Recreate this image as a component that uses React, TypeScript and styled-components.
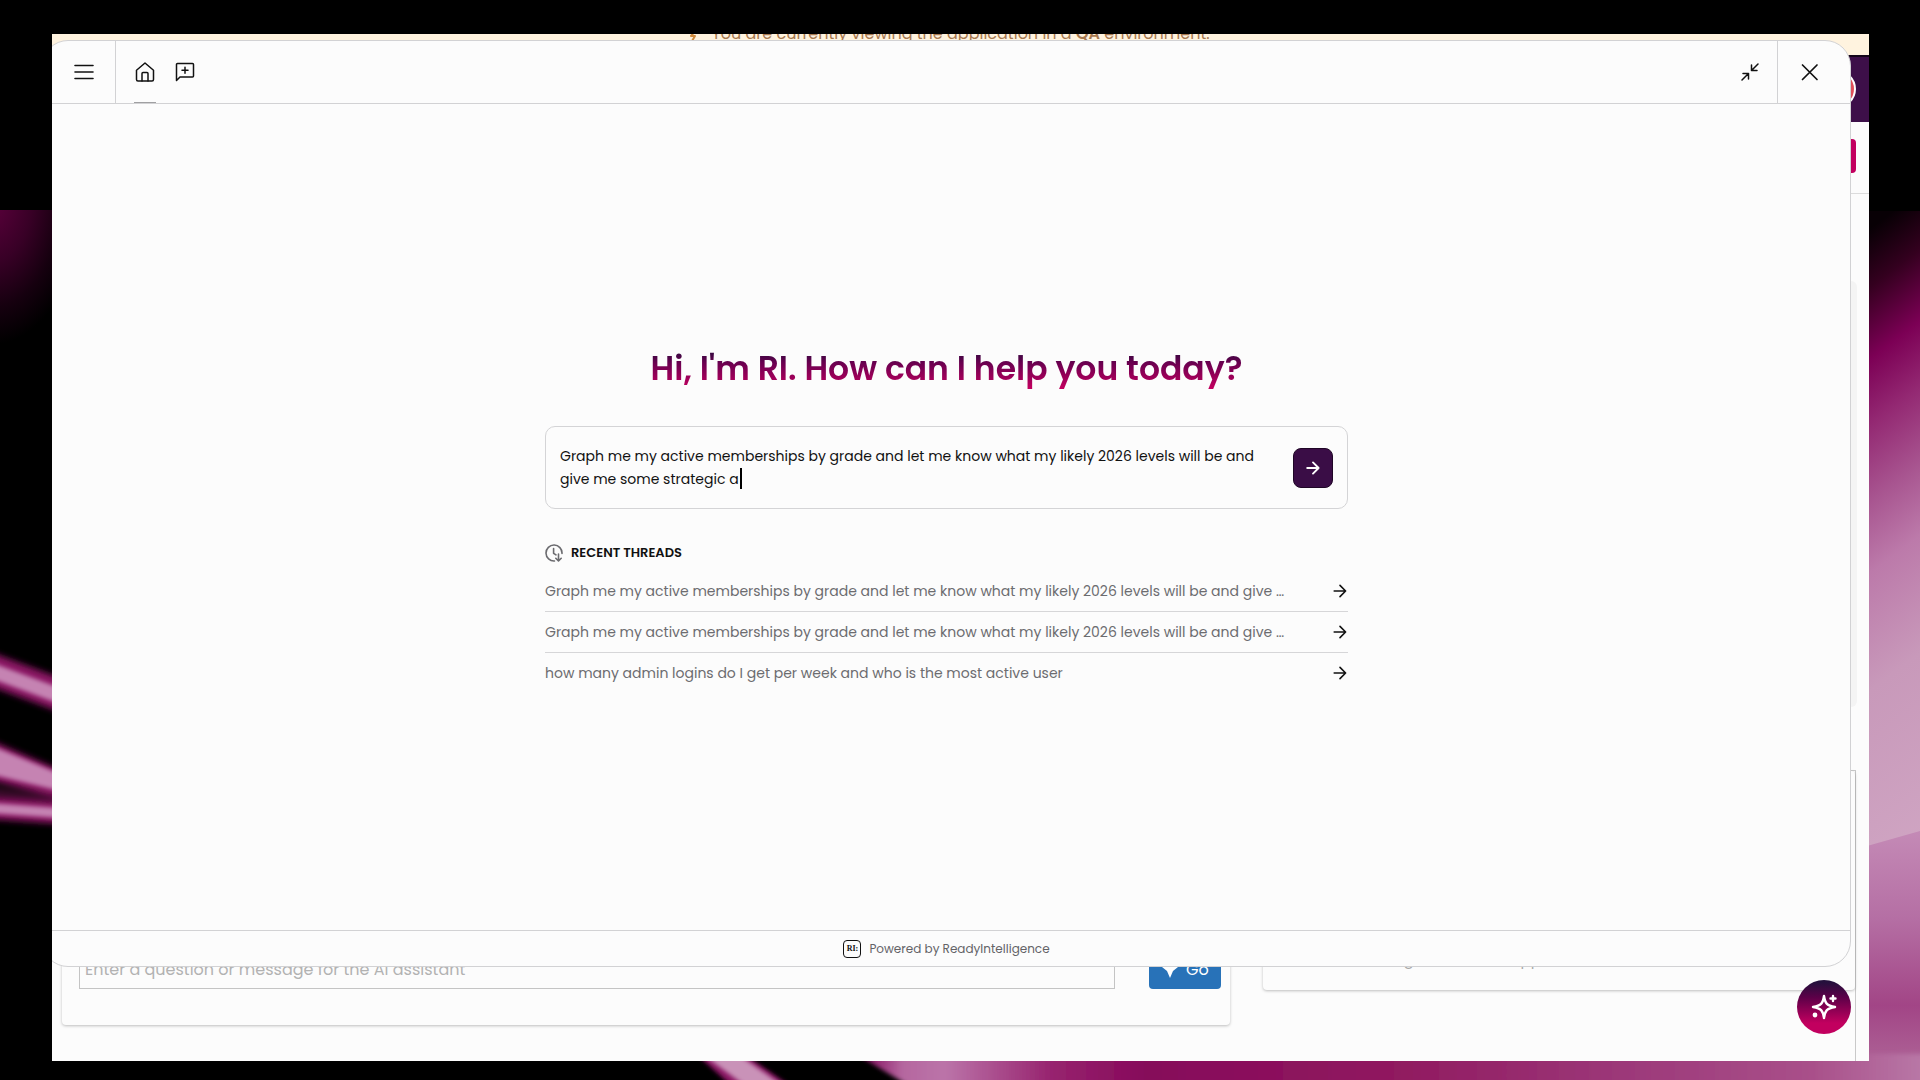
import React, { useState } from "react";
import styled, { createGlobalStyle } from "styled-components";

const Global = createGlobalStyle`
  *, *::before, *::after { box-sizing: border-box; }
  body {
    margin: 0;
    background: #000;
    color: #111;
    font-family: Poppins, Inter, "Open Sans", sans-serif;
  }
  button, input, textarea { font: inherit; }
`;

const LINE = "#d2d2d4";
const PAPER = "#fcfcfc";

const Desktop = styled.div`
  position: relative;
  display: flex;
  min-height: 100vh;
  padding: 34px 51px 19px 52px;
  overflow: hidden;
`;

const Wallpaper = styled.svg`
  position: absolute;
  inset: 0;
  width: 100%;
  height: 100%;
`;

const Window = styled.div`
  position: relative;
  flex: 1;
  display: flex;
  flex-direction: column;
  overflow: hidden;
  background: ${PAPER};
`;

const Banner = styled.div`
  display: flex;
  align-items: center;
  justify-content: center;
  gap: 10px;
  height: 42px;
  margin-top: -21px;
  padding-right: 24px;
  flex: none;
  background: #fff3df;
  color: #a8794f;
  font-size: 16px;
  line-height: 24px;

  strong { font-weight: 600; }
  svg { color: #d08a3c; }
`;

const BrandBar = styled.div`
  display: flex;
  align-items: center;
  justify-content: flex-end;
  flex: none;
  height: 67px;
  padding: 0 13px 2px 0;
  border-top: 2px solid #14051a;
  background: #3d0f49;
`;

const Avatar = styled.span`
  width: 38px;
  height: 38px;
  border: 2px solid #fff;
  border-radius: 50%;
  background: linear-gradient(90deg, #8b7a3c 92%, #e0505a 92%);
`;

const ActionBar = styled.div`
  display: flex;
  align-items: center;
  justify-content: flex-end;
  flex: none;
  height: 72px;
  padding: 0 13px 4px 0;
  border-bottom: 1px solid #dcdcdc;
`;

const PinkButton = styled.button`
  width: 96px;
  height: 34px;
  border: 0;
  border-radius: 4px;
  background: #c2005f;
`;

const Placeholder = styled.div`
  align-self: flex-end;
  flex: 1;
  width: 592px;
  margin: 87px 12px 63px 0;
  border-radius: 6px;
  background: #f4f4f4;
`;

const Workspace = styled.section`
  display: grid;
  grid-template-columns: 1169fr 592fr;
  gap: 33px;
  align-items: start;
  flex: none;
  height: 291px;
  margin-right: 13px;
  padding-left: 10px;
  border: 1px solid #c9c9c9;
  border-width: 1px 1px 0 0;
`;

const Card = styled.div<{ $height: number }>`
  display: flex;
  align-items: flex-end;
  height: ${(p) => p.$height}px;
  border-radius: 4px;
  box-shadow: 0 1px 3px rgba(0, 0, 0, 0.25);
`;

const AskForm = styled.form`
  display: flex;
  flex: 1;
  gap: 34px;
  padding: 0 9px 36px 17px;
`;

const AskInput = styled.input`
  flex: 1;
  min-width: 0;
  height: 40px;
  padding: 0 5px;
  border: 1px solid #c4c4c4;
  background: transparent;
  font-size: 16px;

  &::placeholder { color: #b2b2b2; opacity: 1; }
`;

const GoButton = styled.button`
  display: flex;
  align-items: center;
  justify-content: center;
  gap: 8px;
  width: 72px;
  height: 40px;
  padding: 0;
  border: 0;
  border-radius: 4px;
  background: #2872b8;
  color: #fff;
  font-size: 16px;
`;

const CardNote = styled.p`
  margin: 0;
  padding: 0 0 18px 20px;
  color: #a8a8a8;
  font-size: 15px;
  line-height: 24px;
`;

const Panel = styled.main`
  position: absolute;
  inset: 6px 18px 94px -10px;
  display: flex;
  flex-direction: column;
  border: 1px solid ${LINE};
  border-radius: 26px;
  overflow: hidden;
  background: ${PAPER};
`;

const PanelHeader = styled.header`
  display: flex;
  justify-content: space-between;
  flex: none;
  height: 63px;
  border-bottom: 1px solid ${LINE};
`;

const HeaderGroup = styled.div`
  display: flex;
`;

const HeaderButton = styled.button<{ $width: number; $edge?: "left" | "right" }>`
  display: flex;
  align-items: center;
  justify-content: center;
  width: ${(p) => p.$width}px;
  padding: 0;
  border: 0 solid ${LINE};
  border-left-width: ${(p) => (p.$edge === "left" ? 1 : 0)}px;
  border-right-width: ${(p) => (p.$edge === "right" ? 1 : 0)}px;
  background: none;
  color: #111;
  cursor: pointer;
`;

const MenuButton = styled(HeaderButton)`
  padding-left: 9px;
`;

const Tabs = styled.nav`
  display: flex;
  gap: 18px;
  padding-left: 18px;
`;

const Tab = styled.button<{ $active?: boolean }>`
  display: flex;
  align-items: center;
  justify-content: center;
  width: 22px;
  padding: 0;
  border: 0;
  border-bottom: 1px solid ${(p) => (p.$active ? "#a0a0a2" : "transparent")};
  background: none;
  color: #111;
  cursor: pointer;
`;

const Content = styled.div`
  flex: 1;
  display: flex;
  flex-direction: column;
  align-items: center;
  justify-content: center;
`;

const Column = styled.div`
  width: 100%;
  max-width: 803px;
  padding-top: 3px;
`;

const Title = styled.h1`
  margin: 0 0 32px;
  background: linear-gradient(180deg, #2a0a3c 12%, #6a0050 38%, #c2005f 88%);
  background-clip: text;
  -webkit-background-clip: text;
  color: transparent;
  font-size: 33px;
  font-weight: 600;
  line-height: 50px;
  text-align: center;
`;

const Composer = styled.form`
  position: relative;
  display: flex;
  align-items: center;
  gap: 16px;
  height: 83px;
  padding: 0 14px;
  border: 1px solid #d4d4d6;
  border-radius: 10px;
`;

const Prompt = styled.textarea`
  flex: 1;
  height: 46px;
  padding: 0;
  border: 0;
  outline: 0;
  resize: none;
  overflow: hidden;
  background: transparent;
  color: #111;
  font-size: 14px;
  line-height: 23px;
`;

const Caret = styled.span`
  position: absolute;
  left: 194px;
  top: 41px;
  width: 2px;
  height: 21px;
  background: #000;
`;

const SendButton = styled.button`
  display: flex;
  align-items: center;
  justify-content: center;
  flex: none;
  width: 40px;
  height: 40px;
  padding: 0;
  border: 1px solid #1f0626;
  border-radius: 8px;
  background: #3a0d46;
  color: #fff;
`;

const ThreadsHeading = styled.h2`
  display: flex;
  align-items: center;
  gap: 8px;
  margin: 34px 0 8px;
  font-size: 13px;
  font-weight: 600;
  line-height: 20px;
  color: #111;

  svg { color: #6b6b6f; }
`;

const ThreadList = styled.ul`
  margin: 0;
  padding: 0;
  list-style: none;
`;

const ThreadItem = styled.li`
  & + & { border-top: 1px solid #d6d6d8; }
`;

const ThreadLink = styled.a`
  display: flex;
  align-items: center;
  justify-content: space-between;
  height: 40px;
  color: #6c6c70;
  font-size: 14px;
  text-decoration: none;

  span { white-space: nowrap; }
  svg { color: #111; margin-right: 1px; }
`;

const PanelFooter = styled.footer`
  display: flex;
  align-items: center;
  justify-content: center;
  gap: 8px;
  flex: none;
  height: 36px;
  border-top: 1px solid ${LINE};
  color: #636367;
  font-size: 12px;
`;

const Badge = styled.span`
  display: flex;
  align-items: center;
  justify-content: center;
  width: 18px;
  height: 18px;
  border: 1px solid #111;
  border-radius: 4px;
  color: #111;
  font: bold 8px "Liberation Serif", serif;
`;

const AssistantButton = styled.button`
  position: absolute;
  right: 18px;
  bottom: 27px;
  display: flex;
  align-items: center;
  justify-content: center;
  width: 54px;
  height: 54px;
  padding: 0;
  border: 0;
  border-radius: 50%;
  background: linear-gradient(180deg, #24103c 4%, #5c0048 32%, #c2005f 80%);
  color: #fff;
`;

const Icon = ({ size, stroke = 1.5, children }: { size: number; stroke?: number; children: React.ReactNode }) => (
  <svg width={size} height={size} viewBox={`0 0 ${size} ${size}`} fill="none" stroke="currentColor"
    strokeWidth={stroke} strokeLinecap="round" strokeLinejoin="round" aria-hidden="true">
    {children}
  </svg>
);

const ArrowIcon = ({ stroke = 1.6 }: { stroke?: number }) => (
  <Icon size={14} stroke={stroke}><path d="M1.2 7h11.4M7 1.4 12.6 7 7 12.6" /></Icon>
);

const WallpaperArt = () => (
  <Wallpaper viewBox="0 0 1920 1080" preserveAspectRatio="none" aria-hidden="true">
    <defs>
      <radialGradient id="glow" gradientUnits="userSpaceOnUse" cx="0" cy="0" r="1" gradientTransform="translate(-10 195) scale(95 150)">
        <stop offset="0" stopColor="#60003f" />
        <stop offset="0.45" stopColor="#380026" />
        <stop offset="0.75" stopColor="#16000f" />
        <stop offset="1" stopColor="#000" />
      </radialGradient>
      <linearGradient id="ribbon" gradientUnits="userSpaceOnUse" x1="1868" y1="230" x2="2180" y2="646">
        <stop offset="0" stopColor="#080005" />
        <stop offset="0.09" stopColor="#34001f" />
        <stop offset="0.2" stopColor="#7c0055" />
        <stop offset="0.3" stopColor="#932872" />
        <stop offset="0.42" stopColor="#a85590" />
        <stop offset="0.53" stopColor="#bc7aaa" />
        <stop offset="0.71" stopColor="#c899ba" />
        <stop offset="1" stopColor="#cfa4c2" />
      </linearGradient>
      <linearGradient id="fold" x1="0" y1="0" x2="0" y2="1">
        <stop offset="0" stopColor="#c48ab6" />
        <stop offset="0.35" stopColor="#b56fa4" />
        <stop offset="0.7" stopColor="#a24586" />
        <stop offset="1" stopColor="#b06a9a" />
      </linearGradient>
      <linearGradient id="floor" gradientUnits="userSpaceOnUse" x1="860" y1="0" x2="1920" y2="0">
        <stop offset="0" stopColor="#7c0055" />
        <stop offset="0.04" stopColor="#b5679f" />
        <stop offset="0.08" stopColor="#bb74a9" />
        <stop offset="0.18" stopColor="#97246f" />
        <stop offset="0.27" stopColor="#86085a" />
        <stop offset="0.5" stopColor="#90195f" />
        <stop offset="0.72" stopColor="#9c3879" />
        <stop offset="0.9" stopColor="#a9508a" />
        <stop offset="1" stopColor="#b877a6" />
      </linearGradient>
      <filter id="soft"><feGaussianBlur stdDeviation="2" /></filter>
      <filter id="softer"><feGaussianBlur stdDeviation="3" /></filter>
    </defs>
    <rect width="1920" height="1080" fill="#000" />
    <rect y="210" width="60" height="150" fill="url(#glow)" />
    <rect x="1860" y="211" width="60" height="660" fill="url(#ribbon)" />
    <path d="M1860 848 1920 831V1080H1860Z" fill="url(#fold)" />
    <g filter="url(#softer)" fill="#8a1264">
      <path d="M-10 652 60 678V712L-10 686Z" />
      <path d="M-10 740 60 770V798L-10 780Z" />
      <path d="M-10 797 60 802V824L-10 819Z" />
      <path d="M-10 786 60 796V802L-10 796Z" opacity="0.4" />
    </g>
    <g filter="url(#soft)" fill="#c583b2">
      <path d="M-10 662 60 688V704L-10 678Z" />
      <path d="M-10 745 60 774V791L-10 774Z" />
      <path d="M-10 803 60 808V818L-10 813Z" />
    </g>
    <path d="M694 1052H741L796 1090H736Z" fill="#8a1264" filter="url(#soft)" />
    <path d="M702 1054H738L786 1088H748Z" fill="#c992b8" filter="url(#soft)" />
    <path d="M856 1054H1935V1095H924Z" fill="url(#floor)" filter="url(#soft)" />
  </Wallpaper>
);

const threads = [
  "Graph me my active memberships by grade and let me know what my likely 2026 levels will be and give …",
  "Graph me my active memberships by grade and let me know what my likely 2026 levels will be and give …",
  "how many admin logins do I get per week and who is the most active user",
];

export default function App() {
  const [prompt, setPrompt] = useState(
    "Graph me my active memberships by grade and let me know what my likely 2026 levels will be and give me some strategic a"
  );

  return (
    <>
      <Global />
      <Desktop>
        <WallpaperArt />
        <Window>
          <Banner>
            <Icon size={14} stroke={2}><path d="M5 14 8 9H4l5-6" /></Icon>
            <span>You are currently viewing the application in a <strong>QA</strong> environment.</span>
          </Banner>
          <BrandBar><Avatar /></BrandBar>
          <ActionBar><PinkButton type="button" aria-label="New" /></ActionBar>
          <Placeholder />
          <Workspace>
            <Card $height={254}>
              <AskForm onSubmit={(e) => e.preventDefault()}>
                <AskInput aria-label="Question" placeholder="Enter a question or message for the AI assistant" />
                <GoButton type="submit">
                  <svg width="16" height="18" viewBox="0 0 16 18" fill="currentColor" aria-hidden="true">
                    <path d="M5 0h6v7h5l-5 4-3 7-3-7-5-4h5z" />
                  </svg>
                  Go
                </GoButton>
              </AskForm>
            </Card>
            <Card $height={219}>
              <CardNote>Create a message, or visit the app</CardNote>
            </Card>
          </Workspace>

          <Panel>
            <PanelHeader>
              <HeaderGroup>
                <MenuButton type="button" $width={73} $edge="right" aria-label="Menu">
                  <Icon size={20} stroke={1.6}><path d="M1 3.5h18M1 10h18M1 16.5h18" /></Icon>
                </MenuButton>
                <Tabs>
                  <Tab type="button" $active aria-label="Home">
                    <Icon size={20}>
                      <path d="M1.5 8.2 10 1l8.5 7.200v9.300a1.500 1.500 0 0 1-1.500 1.500H3a1.500 1.500 0 0 1-1.500-1.500z" />
                      <path d="M7 19v-7.500a1 1 0 0 1 1-1h4a1 1 0 0 1 1 1V19" />
                    </Icon>
                  </Tab>
                  <Tab type="button" aria-label="New thread">
                    <Icon size={20}>
                      <path d="M1.500 18.500V2.500a1 1 0 0 1 1-1h15a1 1 0 0 1 1 1v11.500a1 1 0 0 1-1 1H5z" />
                      <path d="M10 5.300v6M7 8.300h6" />
                    </Icon>
                  </Tab>
                </Tabs>
              </HeaderGroup>
              <HeaderGroup>
                <HeaderButton type="button" $width={55} aria-label="Collapse">
                  <Icon size={18}>
                    <path d="M17 1l-6.500 6.500M10.500 2v5.500H16M1 17l6.500-6.500M2 10.500h5.500V16" />
                  </Icon>
                </HeaderButton>
                <HeaderButton type="button" $width={73} $edge="left" aria-label="Close">
                  <Icon size={28} stroke={1.7}><path d="M2.500 7 17 21.500M17 7 2.500 21.500" /></Icon>
                </HeaderButton>
              </HeaderGroup>
            </PanelHeader>

            <Content>
              <Column>
                <Title>Hi, I'm RI. How can I help you today?</Title>
                <Composer onSubmit={(e) => e.preventDefault()}>
                  <Prompt aria-label="Ask RI" value={prompt} onChange={(e) => setPrompt(e.target.value)} spellCheck={false} />
                  <Caret />
                  <SendButton type="submit" aria-label="Send"><ArrowIcon stroke={1.9} /></SendButton>
                </Composer>
                <ThreadsHeading>
                  <Icon size={18} stroke={1.6}>
                    <path d="M9.500 17A8 8 0 1 1 17 9.500M8.600 4.500v4.800l2.400 1.600M13.500 10v6.800M10.800 14.300l2.700 2.700 2.700-2.700" />
                  </Icon>
                  RECENT THREADS
                </ThreadsHeading>
                <ThreadList>
                  {threads.map((text, i) => (
                    <ThreadItem key={i}>
                      <ThreadLink href="#">
                        <span>{text}</span>
                        <ArrowIcon />
                      </ThreadLink>
                    </ThreadItem>
                  ))}
                </ThreadList>
              </Column>
            </Content>

            <PanelFooter>
              <Badge>RI:</Badge>
              Powered by ReadyIntelligence
            </PanelFooter>
          </Panel>

          <AssistantButton type="button" aria-label="Open assistant">
            <Icon size={28} stroke={2.4}>
              <path d="M14 3c1 7 2.500 9.500 11 11-8.500 1.500-10 4-11 11-1-7-2.500-9.500-11-11 8.500-1.500 10-4 11-11z" />
              <path d="M23 3v5M20.500 5.500h5" />
              <circle cx="5" cy="22" r="1.200" />
            </Icon>
          </AssistantButton>
        </Window>
      </Desktop>
    </>
  );
}
